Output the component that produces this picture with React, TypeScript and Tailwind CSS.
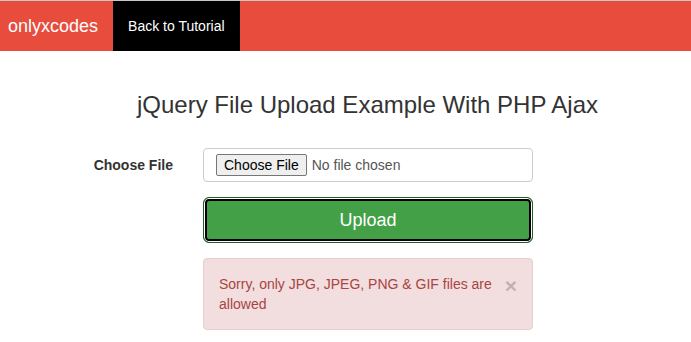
export default function App() {
  return (
    <div className="min-h-[342px] bg-white font-['Liberation_Sans',Arial,sans-serif] text-[14px] text-[#333]">
      <nav className="flex h-[51px] border-t border-[#c8c8c8] bg-[#e74c3c] text-white">
        <a href="#" className="pl-[8px] pr-[15px] pt-[1px] text-[18px] leading-[49px]">
          onlyxcodes
        </a>
        <a href="#" className="bg-black px-[15px] pt-[1px] leading-[49px]">
          Back to Tutorial
        </a>
      </nav>

      <h3 className="mt-[41px] pl-[44px] text-center text-[24px] leading-[26px] text-[#333]">
        jQuery File Upload Example With PHP Ajax
      </h3>

      <form className="mt-[30px]" onSubmit={(e) => e.preventDefault()}>
        <div className="flex items-center gap-[30px]">
          <label className="w-[173px] pt-[1px] text-right font-bold">Choose File</label>
          <div className="flex h-[34px] w-[330px] items-center rounded-[4px] border border-[#ccc] bg-white px-[12px] text-[#555]">
            <span className="rounded-[2px] border border-[#767676] bg-[#efefef] px-[7px] pt-[1px] leading-[19px] text-black">
              Choose File
            </span>
            <span className="ml-[5px] pt-[1px]">No file chosen</span>
          </div>
        </div>

        <div className="ml-[203px] w-[330px]">
          <button
            type="submit"
            className="mt-[15px] h-[46px] w-full rounded-[6px] border border-[#255d27] bg-[#43a047] text-[18px] text-white shadow-[inset_0_0_0_1px_#fff,inset_0_0_0_3px_#000]"
          >
            Upload
          </button>

          <div className="relative mt-[15px] rounded-[4px] border border-[#ebccd1] bg-[#f2dede] py-[15px] pl-[15px] pr-[35px] leading-[20px] text-[#a94442]">
            Sorry, only JPG, JPEG, PNG &amp; GIF files are allowed
            <span className="absolute right-[15px] top-[16px] text-[21px] font-bold leading-[21px] text-black opacity-20">
              ×
            </span>
          </div>
        </div>
      </form>
    </div>
  );
}
